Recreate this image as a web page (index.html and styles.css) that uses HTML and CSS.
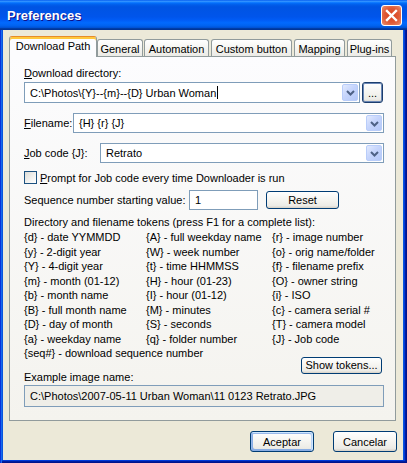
FILE: index.html
```html
<!DOCTYPE html>
<html>
<head>
<meta charset="utf-8">
<title>Preferences</title>
<link rel="stylesheet" href="styles.css">
</head>
<body>
<div class="window">
  <div class="titlebar">
    <span class="title">Preferences</span>
    <span class="close">
      <svg width="13" height="13" viewBox="0 0 13 13"><path d="M2 2 L11 11 M11 2 L2 11" stroke="#fff" stroke-width="2.4" stroke-linecap="square"/></svg>
    </span>
  </div>
  <div class="frame">
    <div class="body">
      <div class="tabs">
        <div class="tab active">Download Path</div>
        <div class="tab">General</div>
        <div class="tab">Automation</div>
        <div class="tab">Custom button</div>
        <div class="tab">Mapping</div>
        <div class="tab">Plug-ins</div>
      </div>
      <div class="panel">
        <div class="label lbl-dir"><u>D</u>ownload directory:</div>
        <div class="row dir-row">
          <div class="combo combo-dir">
            <span class="combo-text">C:\Photos\{Y}--{m}--{D} Urban Woman<span class="caret"></span></span>
            <span class="drop"><svg width="9" height="6" viewBox="0 0 9 6"><polyline points="1,1 4.5,4.5 8,1" fill="none" stroke="#4D6185" stroke-width="2"/></svg></span>
          </div>
          <button class="btn btn-browse">...</button>
        </div>
        <div class="row field-row">
          <span class="label lbl-file"><u>F</u>ilename:</span>
          <div class="combo grow">
            <span class="combo-text">{H} {r} {J}</span>
            <span class="drop"><svg width="9" height="6" viewBox="0 0 9 6"><polyline points="1,1 4.5,4.5 8,1" fill="none" stroke="#4D6185" stroke-width="2"/></svg></span>
          </div>
        </div>
        <div class="row field-row">
          <span class="label lbl-job"><u>J</u>ob code {J}:</span>
          <div class="combo grow">
            <span class="combo-text">Retrato</span>
            <span class="drop"><svg width="9" height="6" viewBox="0 0 9 6"><polyline points="1,1 4.5,4.5 8,1" fill="none" stroke="#4D6185" stroke-width="2"/></svg></span>
          </div>
        </div>
        <div class="row check-row">
          <span class="checkbox"></span>
          <span class="label"><u>P</u>rompt for Job code every time Downloader is run</span>
        </div>
        <div class="row seq-row">
          <span class="label lbl-seq">Sequence number starting value:</span>
          <span class="textbox seq-input">1</span>
          <button class="btn btn-reset">Reset</button>
        </div>
        <div class="label tokens-head">Directory and filename tokens (press F1 for a complete list):</div>
        <div class="tokens">
          <span>{d} - date YYMMDD</span><span>{A} - full weekday name</span><span>{r} - image number</span>
          <span>{y} - 2-digit year</span><span>{W} - week number</span><span>{o} - orig name/folder</span>
          <span>{Y} - 4-digit year</span><span>{t} - time HHMMSS</span><span>{f} - filename prefix</span>
          <span>{m} - month (01-12)</span><span>{H} - hour (01-23)</span><span>{O} - owner string</span>
          <span>{b} - month name</span><span>{I} - hour (01-12)</span><span>{i} - ISO</span>
          <span>{B} - full month name</span><span>{M} - minutes</span><span>{c} - camera serial #</span>
          <span>{D} - day of month</span><span>{S} - seconds</span><span>{T} - camera model</span>
          <span>{a} - weekday name</span><span>{q} - folder number</span><span>{J} - Job code</span>
          <span class="span-all">{seq#} - download sequence number</span>
        </div>
        <button class="btn btn-show">Show tokens...</button>
        <div class="label lbl-example">Example image name:</div>
        <div class="textbox example">C:\Photos\2007-05-11 Urban Woman\11 0123 Retrato.JPG</div>
      </div>
      <div class="buttons">
        <button class="btn btn-main default">Aceptar</button>
        <button class="btn btn-main">Cancelar</button>
      </div>
    </div>
  </div>
</div>
</body>
</html>
```

FILE: styles.css
```css
* { box-sizing: border-box; margin: 0; padding: 0; }
html, body { width: 407px; height: 463px; overflow: hidden; }
body {
  font-family: "Liberation Sans", Arial, sans-serif;
  font-size: 11px;
  color: #000;
  background: #0054E3;
}
.window {
  width: 407px;
  height: 463px;
  display: flex;
  flex-direction: column;
}
.titlebar {
  height: 30px;
  flex: none;
  display: flex;
  align-items: center;
  justify-content: space-between;
  padding: 1px 5px 0 7px;
  background: linear-gradient(180deg, #0058EE 0%, #3593FF 4%, #288EFF 6%, #127DFF 8%, #036FFC 10%, #0262EE 14%, #0057E5 20%, #0054E3 24%, #0055EB 56%, #005BF5 66%, #026AFE 76%, #0062EF 86%, #0052D6 92%, #0040AB 94%, #003092 100%);
}
.title {
  color: #fff;
  font-weight: bold;
  font-size: 13px;
  text-shadow: 1px 1px #0F1089;
}
.close {
  width: 21px;
  height: 21px;
  border: 1px solid #fff;
  border-radius: 3px;
  display: flex;
  align-items: center;
  justify-content: center;
  background: radial-gradient(circle at 50% 50%, #D7411F 0%, #DF5A37 55%, #E7805F 85%, #F2B9A5 100%);
  margin-top: -1px;
}
.frame {
  flex: 1;
  display: flex;
  padding: 0 4px 3px 3px;
  background: #0855DD;
  box-shadow: inset 1px 0 #0831D9, inset 2px 0 #166AEE, inset -1px -1px #00138C, inset -2px -2px #001EA0, inset -3px -3px #003BDA;
}
.body {
  flex: 1;
  background: #ECE9D8;
  display: flex;
  flex-direction: column;
  padding: 6px 0 0 6px;
}
.tabs {
  display: flex;
  align-items: flex-end;
  height: 20px;
  position: relative;
  z-index: 1;
}
.tab {
  height: 17px;
  border: 1px solid #919B9C;
  border-bottom: none;
  border-radius: 3px 3px 0 0;
  background: linear-gradient(180deg, #FFFFFF 0%, #F7F7F4 40%, #ECEBE6 100%);
  display: flex;
  align-items: center;
  justify-content: center;
  padding-top: 1px;
  white-space: nowrap;
}
.tab.active {
  height: 21px;
  margin-bottom: -1px;
  width: 88px;
  border-top: 1px solid #E68B2C;
  box-shadow: inset 0 2px #FFC83C;
  background: #FCFCFE;
  padding-top: 0;
  padding-bottom: 2px;
}
.tab:nth-child(2) { width: 46px; }
.tab:nth-child(3) { width: 65px; margin-left: 1px; }
.tab:nth-child(4) { width: 81px; margin-left: 2px; }
.tab:nth-child(5) { width: 51px; margin-left: 2px; }
.tab:nth-child(6) { width: 45px; margin-left: 2px; }
.panel {
  width: 387px;
  height: 365px;
  border: 1px solid #919B9C;
  background: linear-gradient(180deg, #FCFCFE 0%, #F4F3EE 100%);
  display: flex;
  flex-direction: column;
  padding: 9px 11px 0 14px;
}
.label { line-height: 14px; white-space: nowrap; }
.row { display: flex; align-items: center; }
.lbl-dir { margin-bottom: 2px; }
.dir-row { height: 21px; gap: 2px; }
.combo {
  height: 100%;
  border: 1px solid #7F9DB9;
  background: #fff;
  display: flex;
  align-items: center;
  justify-content: space-between;
  padding: 1px 1px 1px 5px;
}
.combo-dir { width: 336px; }
.grow { flex: 1; }
.combo-text { display: flex; align-items: center; white-space: nowrap; }
.caret { width: 1px; height: 13px; background: #000; margin-left: 1px; }
.drop {
  width: 16px;
  height: 100%;
  border-radius: 2px;
  border: 1px solid #B9CDFA;
  background: linear-gradient(135deg, #E2EAFE 0%, #C6D5FC 45%, #B4C8F8 100%);
  display: flex;
  align-items: center;
  justify-content: center;
  padding-top: 1px;
}
.btn {
  font-family: inherit;
  font-size: 11px;
  color: #000;
  border: 1px solid #003C74;
  border-radius: 3px;
  background: linear-gradient(180deg, #FFFFFF 0%, #F5F4F0 50%, #ECEBE6 86%, #D6D0C5 100%);
  display: flex;
  align-items: center;
  justify-content: center;
  white-space: nowrap;
}
.btn-browse {
  width: 21px;
  height: 21px;
  align-items: flex-end;
  padding-bottom: 3px;
  border: 1px solid #1C3E6E;
  box-shadow: inset 0 0 0 1px #6B87B5;
}
.field-row { height: 20px; margin-top: 10px; }
.lbl-file { width: 49px; }
.lbl-job { width: 76px; }
.check-row { height: 13px; margin-top: 8px; gap: 3px; }
.checkbox {
  width: 13px;
  height: 13px;
  border: 1px solid #1C5180;
  background: linear-gradient(135deg, #DCDCD7 0%, #F2F2F0 60%, #FFFFFF 100%);
}
.seq-row { height: 20px; margin-top: 6px; }
.lbl-seq { width: 165px; }
.textbox {
  border: 1px solid #7F9DB9;
  background: #fff;
  display: flex;
  align-items: center;
  padding-left: 5px;
  white-space: nowrap;
}
.seq-input { width: 69px; height: 20px; }
.btn-reset { width: 73px; height: 18px; margin-left: 8px; }
.tokens-head { margin-top: 5px; }
.tokens {
  margin-top: 1px;
  display: grid;
  grid-template-columns: 122px 126px auto;
  grid-auto-rows: 14.5px;
  line-height: 14.5px;
  white-space: nowrap;
}
.span-all { grid-column: 1 / -1; }
.btn-show {
  align-self: flex-end;
  width: 81px;
  height: 17px;
  margin-top: -4px;
  margin-right: 2px;
}
.lbl-example { margin-top: -4px; }
.example {
  margin-top: 1px;
  height: 22px;
  background: #EFEEE8;
}
.buttons {
  display: flex;
  justify-content: flex-end;
  gap: 19px;
  margin-top: 10px;
  padding-right: 6px;
}
.btn-main { width: 64px; height: 21px; }
.btn-main.default {
  box-shadow: inset -1px 1px #CEE7FF, inset 1px 2px #98B8EA, inset -2px 2px #BCD4F6, inset 1px -1px #89ADE4, inset 2px -2px #89ADE4;
}
```
